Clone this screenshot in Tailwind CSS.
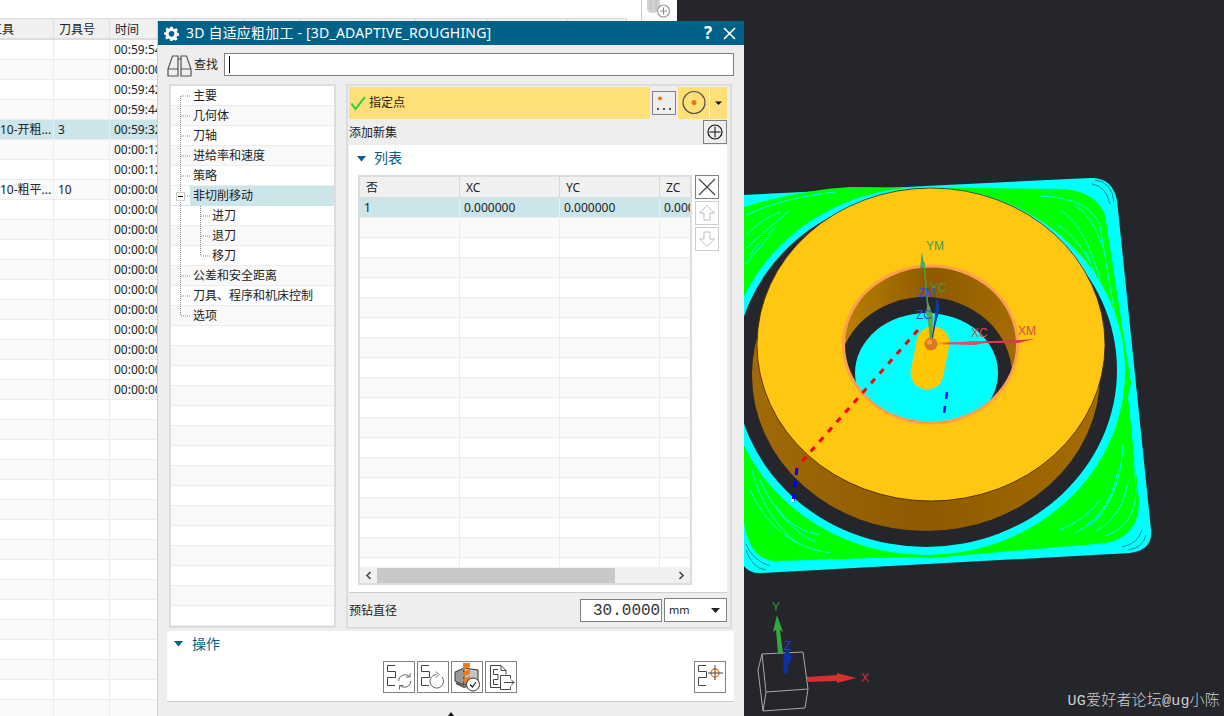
<!DOCTYPE html>
<html lang="zh">
<head>
<meta charset="utf-8">
<script src="https://cdn.jsdelivr.net/npm/@tailwindcss/browser@4"></script>
</head>
<body class="m-0 overflow-hidden">
<div class="relative flex w-[1224px] h-[716px] overflow-hidden bg-[#24262b] font-['Noto_Sans','Noto_Sans_CJK_SC',sans-serif] text-xs text-[#222]">

  <!-- operation navigator behind the dialog -->
  <section class="w-[677px] h-full bg-white shrink-0 relative overflow-hidden">
    <div class="h-[18px] flex justify-end">
      <div class="w-9 h-[21px] border-l border-[#ccc] bg-white">
        <svg width="35" height="21" viewBox="0 0 35 21"><path d="M5 0h13v6a7 7 0 0 1-6 7H9a5 5 0 0 1-4-4z" fill="#d2d2d2"/><path d="M9 0v10M14 0v10" stroke="#bdbdbd"/><circle cx="21.5" cy="11" r="6" fill="#fff" stroke="#9a9a9a" stroke-width="1.2"/><path d="M18 11h7M21.5 7.500v7" stroke="#8a8a8a"/></svg>
      </div>
    </div>
    <div class="w-[627px] h-[22px] border-t border-b-2 border-[#ddd] bg-[#f0f0f0] grid grid-cols-[54px_56px_65px_69px_57px_57px_58px_72px_80px_59px] leading-[22px] [&>span]:border-r [&>span]:border-[#ddd] [&>span]:pl-[5px] [&>span]:whitespace-nowrap">
      <span class="overflow-hidden !pl-0 -indent-[10px]">工具</span><span>刀具号</span><span>时间</span><span></span><span></span><span></span><span></span><span></span><span></span><span></span>
    </div>
    <div class="w-[627px] leading-[19px] [&>div]:h-5 [&>div]:border-b [&>div]:border-[#ececec] [&>div:nth-child(even)]:bg-[#f9f9f9] [&>div]:grid [&>div]:grid-cols-[54px_56px_1fr] [&>div>span]:border-r [&>div>span]:border-[#ececec] [&>div>span]:pl-[4px] [&>div>span]:whitespace-nowrap [&>div>span]:overflow-hidden">
      <div><span></span><span></span><span>00:59:54</span></div>
      <div><span></span><span></span><span>00:00:00</span></div>
      <div><span></span><span></span><span>00:59:42</span></div>
      <div><span></span><span></span><span>00:59:44</span></div>
      <div class="!bg-[#cbe5ea]"><span class="!pl-0">10-开粗...</span><span>3</span><span>00:59:32</span></div>
      <div><span></span><span></span><span>00:00:12</span></div>
      <div><span></span><span></span><span>00:00:12</span></div>
      <div><span class="!pl-0">10-粗平...</span><span>10</span><span>00:00:00</span></div>
      <div><span></span><span></span><span>00:00:00</span></div>
      <div><span></span><span></span><span>00:00:00</span></div>
      <div><span></span><span></span><span>00:00:00</span></div>
      <div><span></span><span></span><span>00:00:00</span></div>
      <div><span></span><span></span><span>00:00:00</span></div>
      <div><span></span><span></span><span>00:00:00</span></div>
      <div><span></span><span></span><span>00:00:00</span></div>
      <div><span></span><span></span><span>00:00:00</span></div>
      <div><span></span><span></span><span>00:00:00</span></div>
      <div><span></span><span></span><span>00:00:00</span></div>
      <div><span></span><span></span><span></span></div><div><span></span><span></span><span></span></div>
      <div><span></span><span></span><span></span></div><div><span></span><span></span><span></span></div>
      <div><span></span><span></span><span></span></div><div><span></span><span></span><span></span></div>
      <div><span></span><span></span><span></span></div><div><span></span><span></span><span></span></div>
      <div><span></span><span></span><span></span></div><div><span></span><span></span><span></span></div>
      <div><span></span><span></span><span></span></div><div><span></span><span></span><span></span></div>
      <div><span></span><span></span><span></span></div><div><span></span><span></span><span></span></div>
      <div><span></span><span></span><span></span></div><div><span></span><span></span><span></span></div>
      <div><span></span><span></span><span></span></div>
    </div>
  </section>

  <!-- 3D graphics canvas -->
  <svg class="absolute left-0 top-0" width="1224" height="716" viewBox="0 0 1224 716" font-family="Liberation Sans, sans-serif" font-size="12">
    <defs>
      <clipPath id="hole"><ellipse cx="930.500" cy="344.500" rx="87" ry="78.500"/></clipPath>
      <linearGradient id="wall" x1="0" x2="1" y1="0" y2="0"><stop offset="0" stop-color="#a06a08"/><stop offset=".5" stop-color="#8e5a00"/><stop offset="1" stop-color="#a56c00"/></linearGradient>
      <linearGradient id="inner" x1="0" x2="1" y1="0" y2="0"><stop offset="0" stop-color="#b98000"/><stop offset=".5" stop-color="#8e5a00"/><stop offset="1" stop-color="#a56c00"/></linearGradient>
    </defs>
    <path d="M700 197 L1090 178 Q1112 177 1117 200 L1151 530 Q1153 550 1130 553 L762 573 Q750 574 744 566 L700 540Z" fill="#00ffff"/>
    <path d="M700 210 L744 207 Q800 190 850 187 L1060 189 Q1095 190 1105 215 L1131 383 L1128 397 L1139 500 Q1140 535 1107 543 L930 558 L910 557 L775 561 Q750 560 744 523 L700 500Z" fill="#00ff00"/>
    <g fill="none" stroke="#00ffff" stroke-width="1">
      <path d="M1040 196 Q1090 198 1100 226 L1124 370"/><path d="M1060 210 Q1085 225 1100 280"/><path d="M1058 225 Q1075 235 1090 262"/><path d="M1075 205 Q1092 215 1104 250"/><path d="M1085 250 Q1095 270 1105 310"/>
      <path d="M1132 420 L1136 490 Q1136 525 1105 536"/><path d="M1118 470 Q1110 515 1075 533"/><path d="M1123 445 Q1120 500 1090 525"/><path d="M1100 500 Q1085 520 1060 530"/><path d="M1128 480 Q1124 515 1095 532"/>
      <path d="M750 490 Q775 545 830 553"/><path d="M760 480 Q780 525 815 542"/><path d="M775 505 Q790 530 820 535"/><path d="M752 470 Q765 520 800 545"/>
      <path d="M746 215 Q780 198 835 192"/><path d="M746 235 Q760 220 780 212"/><path d="M750 255 Q760 240 775 228"/><path d="M745 265 L770 235"/><path d="M746 248 L790 210"/>
    </g>
    <g fill="none" stroke="#1a3a3a" stroke-width=".6">
      <path d="M1095 180 Q1112 182 1114 202"/><path d="M1092 184 Q1106 186 1110 204"/>
      <path d="M1146 535 Q1143 548 1128 550"/><path d="M1142 530 Q1138 544 1122 547"/>
      <path d="M746 550 Q752 568 766 570"/><path d="M746 544 Q752 560 770 566"/>
    </g>
    <ellipse cx="926" cy="371" rx="199" ry="184" fill="#00ffff"/>
    <ellipse cx="926" cy="370" rx="191" ry="177" fill="#24262b"/>
    <path d="M757 340 L752 375 L1100 375 L1105 344Z" fill="url(#wall)"/>
    <ellipse cx="926" cy="375" rx="174" ry="156" fill="url(#wall)"/>
    <ellipse cx="931" cy="344.500" rx="174" ry="156.500" fill="#ffc612" stroke="#3a2a00" stroke-width=".8"/>
    <g clip-path="url(#hole)">
      <ellipse cx="930.500" cy="344.500" rx="87" ry="78.500" fill="url(#inner)"/>
      <ellipse cx="925" cy="375" rx="87" ry="78" fill="#24262b"/>
      <ellipse cx="926.500" cy="373" rx="71.500" ry="60" fill="#00ffff"/>
      <path d="M933 343 L927 373" stroke="#ffc800" stroke-width="33" stroke-linecap="round"/>
      <path d="M947 392 L944 413" stroke="#0000ff" stroke-width="2.500" stroke-dasharray="7 7"/>
    </g>
    <ellipse cx="930.500" cy="344.500" rx="87" ry="78.500" fill="none" stroke="#ff9e4f" stroke-width="3"/>
    <path d="M918 330 L797 467" stroke="#ff0000" stroke-width="3" stroke-dasharray="6 7"/>
    <path d="M797 468 L793 502" stroke="#0000ff" stroke-width="3" stroke-dasharray="7 6"/>
    <rect x="791" y="499" width="3" height="3" fill="#eee"/>
    <!-- datum axes -->
    <path d="M931 344 L924 262" stroke="#3fa64c" stroke-width="1.500"/>
    <path d="M922 252 L925 268 L920 268Z" fill="#4aa860"/>
    <path d="M932 344 L926 312 L928 302 L933 316Z" fill="#5aa84a"/>
    <path d="M932 340 L935 320 L937 299 L939 310 L935 324Z" fill="#0b3ca8" stroke="#0b3ca8" stroke-width="1.200"/>
    <path d="M936 343 L1020 340 L1035 339 L1018 343Z" fill="#d8394a"/>
    <path d="M936 344 L975 341 L985 343 L975 345Z" fill="#e05060"/>
    <circle cx="931" cy="344" r="6.500" fill="#d9791a"/>
    <circle cx="929.500" cy="342" r="2.500" fill="#f0a050"/>
    <g>
      <text x="926" y="250" fill="#3f9a58">YM</text>
      <text x="930" y="292" fill="#3f9a48">YC</text>
      <text x="918" y="297" fill="#2a4fe0">ZM</text>
      <text x="916" y="319" fill="#2a4fe0">ZC</text>
      <text x="971" y="337" fill="#d84a4a">XC</text>
      <text x="1018" y="335" fill="#d84a4a">XM</text>
    </g>
    <!-- orientation triad -->
    <path d="M762 654 L803 652 L808 689 L766 692Z M758 670 L762 654 M758 670 L763 711 L805 708 L808 689 M766 692 L763 711" fill="none" stroke="#a8a8a8" stroke-width="1"/>
    <path d="M778 653 L776 630 L773 632 L777 615 L783 632 L780 630 L783 653Z" fill="#35a83c"/>
    <path d="M807 677 L837 675 L837 673 L856 678 L837 683 L837 681 L807 682Z" fill="#d8302e"/>
    <path d="M785 674 Q782 672 784 665 L783 660 Q783 654 787 650 Q792 654 791 660 L788 665 L788 672Z" fill="#0a30a8"/>
    <text x="772" y="611" fill="#2f9a3a">Y</text>
    <text x="784" y="650" fill="#1a40e0">Z</text>
    <text x="861" y="682" fill="#d03030">X</text>
  </svg>

  <div class="absolute right-[4px] bottom-[4px] text-[15px] leading-5 tracking-[.2px] text-[#cfcfcf] whitespace-nowrap font-['Liberation_Mono','Noto_Sans_CJK_SC',monospace] font-light">UG爱好者论坛@ug小陈</div>

  <!-- dialog window -->
  <section class="absolute left-[157px] top-[21px] w-[587px] h-[695px] bg-[#eeeeee] border-l border-[#cfcfcf] flex flex-col">
    <header class="h-6 bg-[#006289] text-white flex items-center shrink-0 pl-[6px] pr-2">
      <svg width="15" height="15" viewBox="0 0 24 24"><path fill="#fff" fill-rule="evenodd" d="M10 1h4l.6 3a8 8 0 0 1 2.300 1l2.600-1.700 2.800 2.800L20.600 8.700a8 8 0 0 1 1 2.300l2.400.5v4l-3 .5a8 8 0 0 1-1 2.300l1.700 2.600-2.800 2.800-2.600-1.700a8 8 0 0 1-2.300 1L14 24h-4l-.6-3a8 8 0 0 1-2.300-1l-2.600 1.700-2.800-2.800 1.700-2.600a8 8 0 0 1-1-2.300L0 13.500v-3l3-.5a8 8 0 0 1 1-2.300L2.300 5.100l2.800-2.800L7.700 4a8 8 0 0 1 2.300-1zM12 8a4.500 4.500 0 1 0 0 9 4.500 4.500 0 0 0 0-9z"/></svg>
      <span class="ml-[7px] text-sm leading-6 whitespace-nowrap tracking-[.2px]">3D 自适应粗加工 - [3D_ADAPTIVE_ROUGHING]</span>
      <span class="ml-auto text-[17px] font-bold leading-6 mr-[11px]">?</span>
      <svg width="13" height="13" viewBox="0 0 13 13"><path d="M1 1l11 11M12 1L1 12" stroke="#fff" stroke-width="1.700"/></svg>
    </header>

    <div class="h-[39px] shrink-0 flex items-center pl-[9px] pr-[10px]">
      <svg width="25" height="24" viewBox="0 0 25 24" fill="none" stroke="#555" stroke-width="1.200"><path d="M5.500 3H11V23H1V16zM1 16H11"/><path d="M14 3H19.500L24 16V23H14zM14 16H24"/><path d="M11 6H14"/></svg>
      <span class="ml-[2px] w-[30px] leading-4">查找</span>
      <div class="flex-1 h-[23px] bg-white border border-[#808080] flex items-center pl-1"><span class="w-px h-[17px] bg-black"></span></div>
    </div>

    <div class="flex shrink-0 h-[545px] pl-[11px] gap-[10px]">
      <!-- tree -->
      <nav class="relative w-[167px] h-[544px] bg-white border-2 border-[#dddddd] leading-[19px] [&>div]:h-5 [&>div]:border-b [&>div]:border-[#ececec] [&>div]:pl-[22px] [&>div:nth-child(even)]:bg-[#f9f9f9]">
        <div>主要</div><div>几何体</div><div>刀轴</div><div>进给率和速度</div><div>策略</div>
        <div class="!bg-[linear-gradient(to_right,#fff_19px,#cbe5ea_19px)] !border-[#cbe5ea]">非切削移动</div>
        <div class="!pl-[41px]">进刀</div><div class="!pl-[41px]">退刀</div><div class="!pl-[41px]">移刀</div>
        <div>公差和安全距离</div><div>刀具、程序和机床控制</div><div>选项</div>
        <div></div><div></div><div></div><div></div><div></div><div></div><div></div><div></div><div></div><div></div><div></div><div></div><div></div><div></div><div></div>
        <svg class="absolute left-0 top-0" width="60" height="240" fill="none" stroke="#8a8a8a" stroke-dasharray="1 1">
          <path d="M9.500 10V230M10 10H20M10 30H20M10 50H20M10 70H20M10 90H20M14 110H19M10 190H20M10 210H20M10 230H20M29.500 120V170M30 130H40M30 150H40M30 170H40"/>
          <rect x="5.500" y="106.500" width="8" height="8" fill="#fff" stroke="#ccc" stroke-dasharray="none"/>
          <path d="M7 110.500h5" stroke="#000" stroke-dasharray="none"/>
        </svg>
      </nav>

      <!-- property pane -->
      <div class="w-[386px] h-[545px] border-2 border-[#dddddd] pl-px pr-[3px] pt-px flex flex-col">
        <div class="h-8 flex shrink-0">
          <div class="flex-1 bg-[#ffdf78] flex items-center pl-[1px]">
            <svg width="16" height="16" viewBox="0 0 16 16" fill="none"><path d="M1.500 8.500l4 5.500L15 2" stroke="#2ecb3a" stroke-width="2"/></svg>
            <span class="ml-[3px] leading-4">指定点</span>
          </div>
          <div class="w-7 flex items-center justify-center">
            <span class="w-6 h-6 border border-[#808080] flex">
              <svg width="22" height="22" viewBox="0 0 22 22"><circle cx="7" cy="6.500" r="2" fill="#e8761a"/><path d="M4 17h2M10 17h2M16 17h2" stroke="#222" stroke-width="1.500"/></svg>
            </span>
          </div>
          <div class="w-[49px] bg-[#ffdf78] flex items-center">
            <svg width="49" height="32" viewBox="0 0 49 32" fill="none"><circle cx="16" cy="15.500" r="11" stroke="#555" stroke-width="1.200"/><circle cx="16" cy="15.500" r="2.500" fill="#e8761a"/><path d="M31.500 1v30" stroke="#fff"/><path d="M37 14.500h7l-3.500 3.500z" fill="#111"/></svg>
          </div>
        </div>
        <div class="h-[26px] flex items-center justify-between shrink-0">
          <span class="leading-[18px] mt-[2px]">添加新集</span>
          <span class="w-6 h-6 border border-[#808080] flex items-center justify-center"><svg width="16" height="16" viewBox="0 0 16 16" fill="none" stroke="#111"><circle cx="8" cy="8" r="7" stroke-width="1.200"/><path d="M2.500 8h11M8 2.500v11"/></svg></span>
        </div>
        <div class="h-[448px] bg-white border-b border-[#cfcfcf] shrink-0 pl-[9px] flex flex-col">
          <div class="h-[30px] flex items-start shrink-0">
            <svg width="9" height="6" viewBox="0 0 9 6" class="-ml-[1px] mt-[11px]"><path d="M0 0h9L4.500 5.500z" fill="#00628a"/></svg>
            <span class="ml-[8px] text-[#00628a] text-sm leading-[26px]">列表</span>
          </div>
          <div class="flex gap-[3px]">
            <div class="w-[334px] h-[410px] border-2 border-[#dddddd] flex flex-col overflow-hidden">
              <div class="h-[21px] shrink-0 bg-[#f0f0f0] border-b border-[#ddd] grid grid-cols-[100px_100px_100px_30px] leading-[22px] [&>span]:border-r [&>span]:border-[#d8d8d8] [&>span]:pl-[6px]">
                <span>否</span><span>XC</span><span>YC</span><span class="!border-0">ZC</span>
              </div>
              <div class="flex-1 overflow-hidden leading-[19px] [&>div]:h-5 [&>div]:shrink-0 [&>div]:border-b [&>div]:border-[#ececec] [&>div:nth-child(even)]:bg-[#f9f9f9] [&>div]:grid [&>div]:grid-cols-[100px_100px_100px_30px] [&>div>span]:border-r [&>div>span]:border-[#ececec] [&>div>span]:pl-1 [&>div>span]:whitespace-nowrap [&>div>span]:overflow-hidden">
                <div class="!bg-[#cbe5ea]"><span>1</span><span>0.000000</span><span>0.000000</span><span class="!border-0">0.000000</span></div>
                <div><span></span><span></span><span></span><span class="!border-0"></span></div><div><span></span><span></span><span></span><span class="!border-0"></span></div>
                <div><span></span><span></span><span></span><span class="!border-0"></span></div><div><span></span><span></span><span></span><span class="!border-0"></span></div>
                <div><span></span><span></span><span></span><span class="!border-0"></span></div><div><span></span><span></span><span></span><span class="!border-0"></span></div>
                <div><span></span><span></span><span></span><span class="!border-0"></span></div><div><span></span><span></span><span></span><span class="!border-0"></span></div>
                <div><span></span><span></span><span></span><span class="!border-0"></span></div><div><span></span><span></span><span></span><span class="!border-0"></span></div>
                <div><span></span><span></span><span></span><span class="!border-0"></span></div><div><span></span><span></span><span></span><span class="!border-0"></span></div>
                <div><span></span><span></span><span></span><span class="!border-0"></span></div><div><span></span><span></span><span></span><span class="!border-0"></span></div>
                <div><span></span><span></span><span></span><span class="!border-0"></span></div><div><span></span><span></span><span></span><span class="!border-0"></span></div>
                <div><span></span><span></span><span></span><span class="!border-0"></span></div><div><span></span><span></span><span></span><span class="!border-0"></span></div>
              </div>
              <div class="h-4 shrink-0 bg-[#f0f0f0] flex items-center">
                <span class="w-[17px] flex justify-center"><svg width="7" height="9" viewBox="0 0 7 9" fill="none"><path d="M5.500 1L2 4.500 5.500 8" stroke="#444" stroke-width="1.600"/></svg></span>
                <span class="w-[238px] h-[15px] bg-[#c8c8c8]"></span>
                <span class="flex-1 flex justify-end pr-[5px]"><svg width="7" height="9" viewBox="0 0 7 9" fill="none"><path d="M1.500 1L5 4.500 1.500 8" stroke="#444" stroke-width="1.600"/></svg></span>
              </div>
            </div>
            <div class="flex flex-col gap-[2px]">
              <span class="w-6 h-6 border border-[#808080] flex"><svg width="22" height="22" viewBox="0 0 22 22"><path d="M3 3l16 16M19 3L3 19" stroke="#444" stroke-width="1.200"/></svg></span>
              <span class="w-6 h-6 border border-[#cccccc] flex"><svg width="22" height="22" viewBox="0 0 22 22" fill="none"><path d="M11 3.500L3.500 11H8v7h6v-7h4.500z" stroke="#bdbdbd"/></svg></span>
              <span class="w-6 h-6 border border-[#cccccc] flex"><svg width="22" height="22" viewBox="0 0 22 22" fill="none"><path d="M11 18.500L3.500 11H8V4h6v7h4.500z" stroke="#bdbdbd"/></svg></span>
            </div>
          </div>
        </div>
        <div class="flex-1 flex items-center">
          <span class="leading-[18px] mt-[1px]">预钻直径</span>
          <span class="ml-auto w-[82px] h-[23px] bg-white border border-[#808080] overflow-hidden pl-3 text-base text-[#333] leading-[22px] whitespace-nowrap font-['Liberation_Mono',monospace]">30.00000</span>
          <span class="ml-[2px] w-[63px] h-6 bg-white border border-[#808080] flex items-center justify-between pl-1 pr-[6px] text-[11px]">mm<svg width="9" height="5" viewBox="0 0 9 5"><path d="M0 0h9L4.500 5z" fill="#222"/></svg></span>
        </div>
      </div>
    </div>

    <!-- actions -->
    <div class="mt-[2px] ml-[9px] mr-[10px] h-[71px] bg-white border-b border-[#cfcfcf] flex flex-col shrink-0">
      <div class="h-[30px] flex items-start pl-[7px] shrink-0">
        <svg width="9" height="6" viewBox="0 0 9 6" class="mt-[10px]"><path d="M0 0h9L4.500 5.500z" fill="#00628a"/></svg>
        <span class="ml-[9px] text-[#00628a] text-sm leading-[26px]">操作</span>
      </div>
      <div class="flex pl-[216px] pr-2 gap-[2px]">
        <span class="w-8 h-8 border border-[#808080] flex">
          <svg width="30" height="30" viewBox="0 0 30 30" fill="none" stroke="#444"><path d="M11 3.500H3.500V9.500H11.500V15.500H3.500V23.500H11"/><path d="M14.500 19a6.500 6.500 0 0 1 11-4.500M27 19a6.500 6.500 0 0 1-11 4.500M26 11v4h-4M15.500 27.500v-4h4" stroke="#666"/></svg>
        </span>
        <span class="w-8 h-8 border border-[#808080] flex">
          <svg width="30" height="30" viewBox="0 0 30 30" fill="none" stroke="#444"><path d="M11 3.500H3.500V9.500H11.500V15.500H3.500V23.500H11"/><path d="M24 15a6.800 6.800 0 1 1-5.500-2.500M18 9.500l3 3-3 3" stroke="#666"/></svg>
        </span>
        <span class="w-8 h-8 border border-[#808080] flex">
          <svg width="30" height="30" viewBox="0 0 30 30" fill="none"><path d="M3 10l9-4v17l-9-4z" fill="#9a9a9a" stroke="#333"/><path d="M12 6l14 2v11l-14 4z" fill="#c4c4c4" stroke="#333"/><path d="M4 21l8 4 10-3" stroke="#555" stroke-width="2"/><path d="M11 1h7v4l-7 3zM11 10l7-3v5l-7 3zM11 17l7-3v4l-3.500 5-3.500-4z" fill="#ee7a1c"/><circle cx="21" cy="22.500" r="6.500" fill="#fff" stroke="#333"/><path d="M18 22.500l2.500 2.500 3.500-5" stroke="#222" stroke-width="1.200"/></svg>
        </span>
        <span class="w-8 h-8 border border-[#808080] flex">
          <svg width="30" height="30" viewBox="0 0 30 30" fill="none" stroke="#444"><path d="M4.500 3.500H15L20 8.500V12.500M15 3.500V8.500H20M4.500 3.500V25.500H14.500"/><path d="M12 7.500H7.500V12.500H12V17.500H7.500V22.500H12"/><path d="M14.500 13.500H24.500V16.500M14.500 13.500V27.500H24.500V24.500M18 20.500H28M25 17.500l3 3-3 3"/></svg>
        </span>
        <span class="ml-auto w-8 h-8 border border-[#808080] flex">
          <svg width="30" height="30" viewBox="0 0 30 30" fill="none"><path d="M11 3.500H3.500V9.500H11.500V15.500H3.500V23.500H11" stroke="#444"/><circle cx="20" cy="11" r="4" stroke="#ee7a1c" stroke-width="1.300"/><path d="M20 3v15M13 11h15" stroke="#444"/></svg>
        </span>
      </div>
    </div>
    <svg class="absolute left-[290px] top-[691px]" width="6" height="4" viewBox="0 0 6 4"><path d="M3 0l3 4H0z" fill="#111"/></svg>
  </section>
</div>
</body>
</html>
